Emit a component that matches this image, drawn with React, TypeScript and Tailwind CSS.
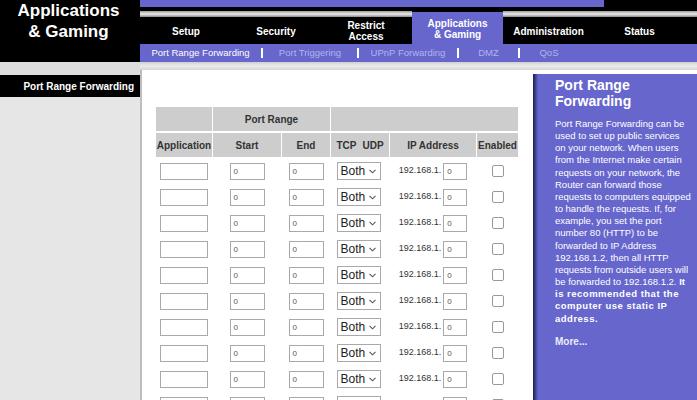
import React from "react";

interface Tab {
  lines: string[];
  w: string;
  active?: boolean;
}

const TABS: Tab[] = [
  { lines: ["Setup"], w: "w-[92px]" },
  { lines: ["Security"], w: "w-[88px]" },
  { lines: ["Restrict", "Access"], w: "w-[92px]" },
  { lines: ["Applications", "& Gaming"], w: "w-[91px]", active: true },
  { lines: ["Administration"], w: "w-[91px]" },
  { lines: ["Status"], w: "w-[91px]" },
];

const SUBNAV = [
  { label: "Port Range Forwarding", w: "w-[121px]", active: true },
  { label: "Port Triggering", w: "w-[94px]" },
  { label: "UPnP Forwarding", w: "w-[98px]" },
  { label: "DMZ", w: "w-[59px]" },
  { label: "QoS", w: "w-[58px]" },
];

const HELP = [
  "Port Range Forwarding can be",
  "used to set up public services",
  "on your network. When users",
  "from the Internet make certain",
  "requests on your network, the",
  "Router can forward those",
  "requests to computers equipped",
  "to handle the requests. If, for",
  "example, you set the port",
  "number 80 (HTTP) to be",
  "forwarded to IP Address",
  "192.168.1.2, then all HTTP",
  "requests from outside users will",
];

const ROWS = Array.from({ length: 10 }, (_, i) => i);

const COLS = "grid grid-cols-[56px_68px_48px_58px_86px_41px] gap-x-px";

function Box({ w, value }: { w: string; value?: string }) {
  return (
    <div
      className={`${w} h-[17px] border border-[#a9a9a9] bg-white pl-[3px] text-[8px] leading-[15px] text-[#555]`}
    >
      {value}
    </div>
  );
}

function NavTab({ tab }: { tab: Tab }) {
  const text = (
    <>
      {tab.lines.map((l) => (
        <span key={l} className="block">
          {l}
        </span>
      ))}
    </>
  );

  if (tab.active) {
    return (
      <div className={`${tab.w} flex flex-col`}>
        <div className="h-[5px] shrink-0 bg-black" />
        <div className="flex-1 bg-[#6666cc] flex flex-col justify-center text-center text-white font-bold text-[10px] leading-[11px] pt-[1px]">
          {text}
        </div>
      </div>
    );
  }

  return (
    <div className={`${tab.w} flex flex-col`}>
      <div className="h-[4px] shrink-0 bg-black" />
      <div className="h-[6px] shrink-0 bg-linear-to-b from-[#9a9a9a] via-[#ececec] to-[#8a8a8a]" />
      <div className="flex-1 bg-black flex flex-col justify-center text-center text-white font-bold text-[10px] leading-[11px] pt-[1px]">
        {text}
      </div>
    </div>
  );
}

export default function App() {
  return (
    <div className="w-[697px] h-[400px] overflow-hidden flex bg-white font-['Liberation_Sans',Arial,sans-serif]">
      {/* left column */}
      <aside className="w-[140px] shrink-0 flex flex-col bg-[#e6e6e6]">
        <div className="h-[62px] shrink-0 bg-black text-white font-bold text-[17px] leading-[21px] text-center pr-[3px]">
          Applications
          <br />
          &amp; Gaming
        </div>
        <div className="h-[13px] shrink-0 bg-[#dedede]" />
        <div className="h-[22px] shrink-0 bg-black text-white font-bold text-[10px] flex items-center justify-end pr-[6px]">
          Port Range Forwarding
        </div>
      </aside>

      <div className="flex-1 flex flex-col min-h-0">
        {/* top stripe */}
        <div className="h-[7px] shrink-0 flex">
          <div className="w-[464px] bg-[#6666cc]" />
          <div className="flex-1 bg-black" />
        </div>

        {/* tabs */}
        <div className="h-[37px] shrink-0 flex">
          {TABS.map((t) => (
            <NavTab key={t.lines.join(" ")} tab={t} />
          ))}
          <div className="flex-1 flex flex-col">
            <div className="h-[4px] shrink-0 bg-black" />
            <div className="h-[6px] shrink-0 bg-linear-to-b from-[#9a9a9a] via-[#ececec] to-[#8a8a8a]" />
            <div className="flex-1 bg-black" />
          </div>
        </div>

        {/* sub nav */}
        <div className="h-[18px] shrink-0 bg-[#6666cc] flex items-center text-[9.5px]">
          {SUBNAV.map((s, i) => (
            <React.Fragment key={s.label}>
              {i > 0 && <div className="w-[2px] h-[10px] bg-white" />}
              <div
                className={`${s.w} text-center ${
                  s.active ? "text-white" : "text-[#b4b4ea]"
                }`}
              >
                {s.label}
              </div>
            </React.Fragment>
          ))}
        </div>
        <div className="h-[8px] shrink-0 bg-linear-to-b from-[#cfcfcf] via-[#ececec] to-[#d4d4d4]" />

        {/* body */}
        <div className="flex-1 min-h-0 flex">
          <main className="w-[393px] shrink-0 border-l-2 border-[#bdbdbd] pl-[14px] pt-[37px]">
            <div className="flex flex-col gap-y-[2px] text-[10px] font-bold text-[#333]">
              <div className={`${COLS} h-[24px]`}>
                <div className="bg-[#cdcdcd]" />
                <div className="col-span-2 bg-[#cdcdcd] flex items-center justify-center">
                  Port Range
                </div>
                <div className="col-span-3 bg-[#cdcdcd]" />
              </div>
              <div className={`${COLS} h-[24px]`}>
                <div className="bg-[#cdcdcd] flex items-center justify-center">Application</div>
                <div className="bg-[#cdcdcd] flex items-center justify-center">Start</div>
                <div className="bg-[#cdcdcd] flex items-center justify-center">End</div>
                <div className="bg-[#cdcdcd] flex items-center justify-center gap-[6px]">
                  <span>TCP</span>
                  <span>UDP</span>
                </div>
                <div className="bg-[#cdcdcd] flex items-center justify-center">IP Address</div>
                <div className="bg-[#cdcdcd] flex items-center justify-center">Enabled</div>
              </div>
            </div>

            <div className="pt-px">
              {ROWS.map((r) => (
                <div key={r} className={`${COLS} h-[26px] items-center`}>
                  <div className="flex justify-center">
                    <Box w="w-[48px]" />
                  </div>
                  <div className="flex justify-center">
                    <Box w="w-[35px]" value="0" />
                  </div>
                  <div className="flex justify-center">
                    <Box w="w-[35px]" value="0" />
                  </div>
                  <div className="flex justify-center pr-[3px]">
                    <div className="w-[44px] h-[18px] border border-[#a9a9a9] bg-white flex items-center justify-between pl-[3px] pr-[4px] text-[12px] text-[#222]">
                      <span>Both</span>
                      <svg width="7" height="5" viewBox="0 0 7 5" fill="none">
                        <path d="M0.5 0.8 L3.5 3.8 L6.5 0.8" stroke="#555" strokeWidth="1.1" />
                      </svg>
                    </div>
                  </div>
                  <div className="flex items-center justify-center gap-[2px] text-[9px] text-[#333]">
                    <span>192.168.1.</span>
                    <Box w="w-[24px]" value="0" />
                  </div>
                  <div className="flex justify-center">
                    <div className="w-[12px] h-[12px] border border-[#999] rounded-[2px] bg-white" />
                  </div>
                </div>
              ))}
            </div>
          </main>

          {/* help panel */}
          <section className="flex-1 pt-[4px] flex">
            <div className="flex-1 flex bg-[#6666cc]">
              <div className="w-[5px] shrink-0 bg-linear-to-r from-[#1d1d52] to-[#6666cc]" />
              <div className="pl-[17px] pt-[3px] text-white">
                <h2 className="font-bold text-[14px] leading-[16px]">
                  Port Range
                  <br />
                  Forwarding
                </h2>
                <div className="mt-[9px] text-[9.5px] leading-[12.15px] whitespace-nowrap">
                  {HELP.map((l) => (
                    <div key={l}>{l}</div>
                  ))}
                  <div>
                    be forwarded to 192.168.1.2. <span className="font-bold">It</span>
                  </div>
                  <div className="font-bold tracking-[0.5px]">is recommended that the</div>
                  <div className="font-bold tracking-[0.5px]">computer use static IP</div>
                  <div className="font-bold tracking-[0.5px]">address.</div>
                </div>
                <div className="mt-[9px] font-bold text-[10px] text-[#ececf8]">More...</div>
              </div>
            </div>
          </section>
        </div>
      </div>
    </div>
  );
}
